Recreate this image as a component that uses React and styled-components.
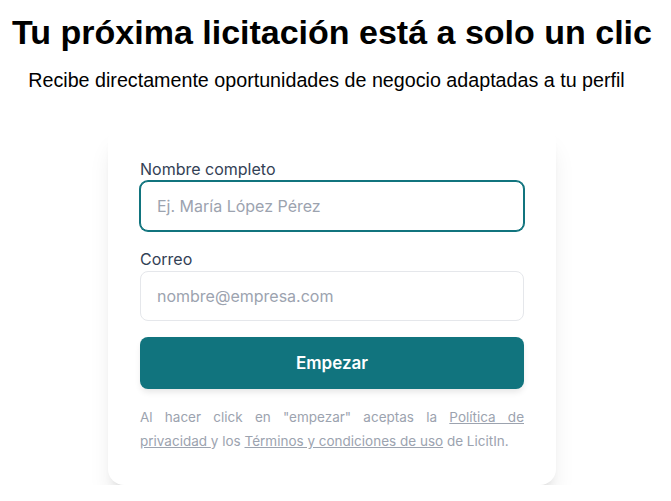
import React from 'react'
import styled, { createGlobalStyle } from 'styled-components'

const GlobalStyle = createGlobalStyle`
  body {
    margin: 0;
    background: #ffffff;
    font-family: 'Liberation Sans', Arial, sans-serif;
  }
`

const Page = styled.main`
  display: flex;
  flex-direction: column;
  align-items: center;
  padding: 13px 7px 0 0;
`

const Title = styled.h1`
  margin: 0;
  font-size: 34px;
  line-height: 39px;
  font-weight: 700;
  color: #000;
`

const Subtitle = styled.p`
  margin: 17px 11px 0 0;
  font-size: 19.7px;
  line-height: 22px;
  color: #000;
`

const Card = styled.form`
  margin-top: 34px;
  width: 448px;
  box-sizing: border-box;
  padding: 32px;
  background: #fff;
  border-radius: 16px;
  box-shadow: 0 20px 25px -5px rgba(0, 0, 0, 0.1),
    0 8px 10px -6px rgba(0, 0, 0, 0.1);
  display: flex;
  flex-direction: column;
  gap: 16px;
  font-family: Inter, 'Noto Sans', sans-serif;
`

const Field = styled.label`
  display: flex;
  flex-direction: column;
`

const Label = styled.span`
  font-size: 16px;
  line-height: 24px;
  font-weight: 400;
  color: #334155;
`

const Input = styled.input`
  height: 50px;
  box-sizing: border-box;
  padding: 0 16px;
  font-family: inherit;
  font-size: 16px;
  color: #111827;
  border-radius: 8px;
  border: 1px solid ${p => (p.$focused ? '#11747e' : '#e5e7eb')};
  box-shadow: ${p => (p.$focused ? '0 0 0 1px #11747e' : 'none')};
  outline: none;

  &::placeholder {
    color: #9ca3af;
  }
`

const Button = styled.button`
  height: 52px;
  border: none;
  border-radius: 8px;
  background: #11747e;
  color: #fff;
  font-family: inherit;
  font-size: 17px;
  font-weight: 600;
  box-shadow: 0 4px 6px -1px rgba(0, 0, 0, 0.1);
  cursor: pointer;
`

const Legal = styled.p`
  margin: 0;
  font-size: 13.5px;
  line-height: 24px;
  color: #9ca3af;
  text-align: justify;

  a {
    color: inherit;
    text-decoration: underline;
  }
`

export default function App() {
  return (
    <>
      <GlobalStyle />
      <Page>
        <Title>Tu próxima licitación está a solo un clic</Title>
        <Subtitle>
          Recibe directamente oportunidades de negocio adaptadas a tu perfil
        </Subtitle>
        <Card onSubmit={e => e.preventDefault()}>
          <Field>
            <Label>Nombre completo</Label>
            <Input $focused placeholder="Ej. María López Pérez" />
          </Field>
          <Field>
            <Label>Correo</Label>
            <Input type="email" placeholder="nombre@empresa.com" />
          </Field>
          <Button type="submit">Empezar</Button>
          <Legal>
            Al hacer click en "empezar" aceptas la{' '}
            <a href="#">Política de privacidad </a>y los{' '}
            <a href="#">Términos y condiciones de uso</a> de LicitIn.
          </Legal>
        </Card>
      </Page>
    </>
  )
}
